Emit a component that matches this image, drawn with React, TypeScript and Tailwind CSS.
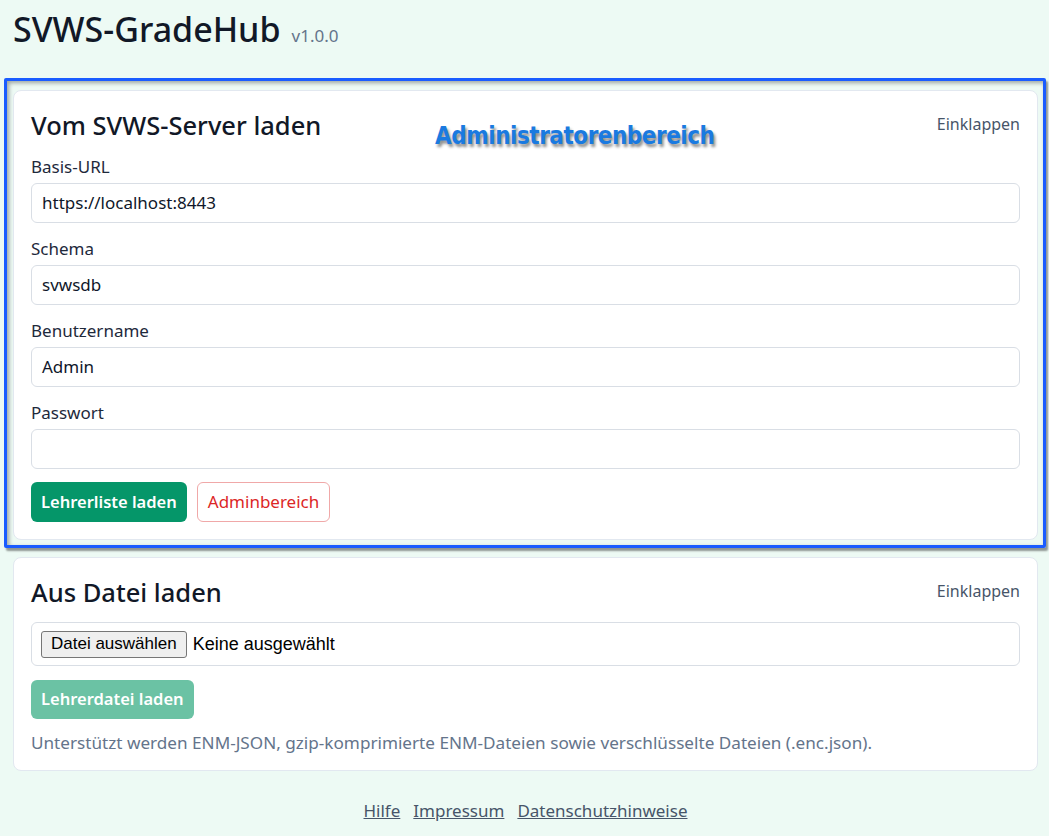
import React from 'react';

const font = { fontFamily: '"Noto Sans", "Open Sans", sans-serif' };

function Field({ label, value }: { label: string; value: string }) {
  return (
    <div>
      <label className="block text-[17px] leading-6 text-[#1e293b] mb-1">{label}</label>
      <div className="h-10 rounded-md border border-[#d9dee5] bg-white px-[10px] flex items-center text-[17px] text-[#0f172a]">
        {value}
      </div>
    </div>
  );
}

export default function App() {
  return (
    <div className="min-h-screen bg-[#edfaf4] text-[#0f172a]" style={font}>
      <div className="w-[1025px] ml-[13px] pt-[9px] pb-4">
        <h1 className="flex items-baseline gap-[11px] mb-[41px]">
          <span className="text-[34px] font-medium leading-10 text-[#111827]">SVWS-GradeHub</span>
          <span className="text-[17px] text-[#64748b]">v1.0.0</span>
        </h1>

        {/* admin card with annotation overlay */}
        <div className="relative">
          <div className="absolute -left-[9px] -top-[12px] -right-[8px] -bottom-[8px] border-[3px] border-[#1a5cff] rounded-[2px] shadow-[2px_3px_2px_rgba(0,0,0,0.4),inset_2px_2px_4px_rgba(0,0,0,0.35)] pointer-events-none" />
          <div className="relative bg-white border border-[#e2e8f0] rounded-lg px-[17px] pt-[18px] pb-[17px]">
            <div className="flex justify-between items-start">
              <h2 className="text-[25.5px] font-medium leading-8 text-[#111827]">Vom SVWS-Server laden</h2>
              <button className="text-[16px] text-[#475569] mt-[3px]">Einklappen</button>
            </div>
            <div className="mt-[14px] flex flex-col gap-[14px]">
              <Field label="Basis-URL" value="https://localhost:8443" />
              <Field label="Schema" value="svwsdb" />
              <Field label="Benutzername" value="Admin" />
              <Field label="Passwort" value="" />
            </div>
            <div className="mt-[13px] flex gap-[10px]">
              <button className="h-10 px-[10px] rounded-md bg-[#059669] text-white text-[16.5px] font-semibold">
                Lehrerliste laden
              </button>
              <button className="h-10 px-[10px] rounded-md bg-white border border-[#f0a8a8] text-[#dc2626] text-[17px]">
                Adminbereich
              </button>
            </div>
          </div>
          <div
            className="absolute left-[422px] top-[27px] text-[25px] font-bold text-[#1a7ae0] tracking-[-0.5px] [text-shadow:2px_3px_3px_rgba(0,0,0,0.45)] origin-left scale-x-[0.96]"
            style={{ fontFamily: '"DejaVu Sans Condensed", "Noto Sans", sans-serif' }}
          >
            Administratorenbereich
          </div>
        </div>

        <div className="mt-[17px] bg-white border border-[#e2e8f0] rounded-lg px-[17px] pt-[18px] pb-[15px]">
          <div className="flex justify-between items-start">
            <h2 className="text-[25.5px] font-medium leading-8 text-[#111827]">Aus Datei laden</h2>
            <button className="text-[16px] text-[#475569] mt-[3px]">Einklappen</button>
          </div>
          <div className="mt-[14px] h-[44px] rounded-md border border-[#d9dee5] px-[9px] flex items-center gap-[6px]" style={{ fontFamily: '"Liberation Sans", Arial, sans-serif' }}>
            <span className="h-[27px] px-[9px] flex items-center bg-[#efefef] border border-[#767676] rounded-[3px] text-[17px] text-black">
              Datei auswählen
            </span>
            <span className="text-[18px] text-black">Keine ausgewählt</span>
          </div>
          <button className="mt-[14px] h-[39px] px-[10px] rounded-md bg-[#6bc2a4] text-white text-[16.5px] font-semibold">
            Lehrerdatei laden
          </button>
          <p className="mt-[12px] text-[17.15px] text-[#64748b] leading-6">
            Unterstützt werden ENM-JSON, gzip-komprimierte ENM-Dateien sowie verschlüsselte Dateien (.enc.json).
          </p>
        </div>

        <footer className="mt-[27px] flex justify-center gap-[13px] text-[17px] text-[#475569]">
          <a className="underline">Hilfe</a>
          <a className="underline">Impressum</a>
          <a className="underline">Datenschutzhinweise</a>
        </footer>
      </div>
    </div>
  );
}
